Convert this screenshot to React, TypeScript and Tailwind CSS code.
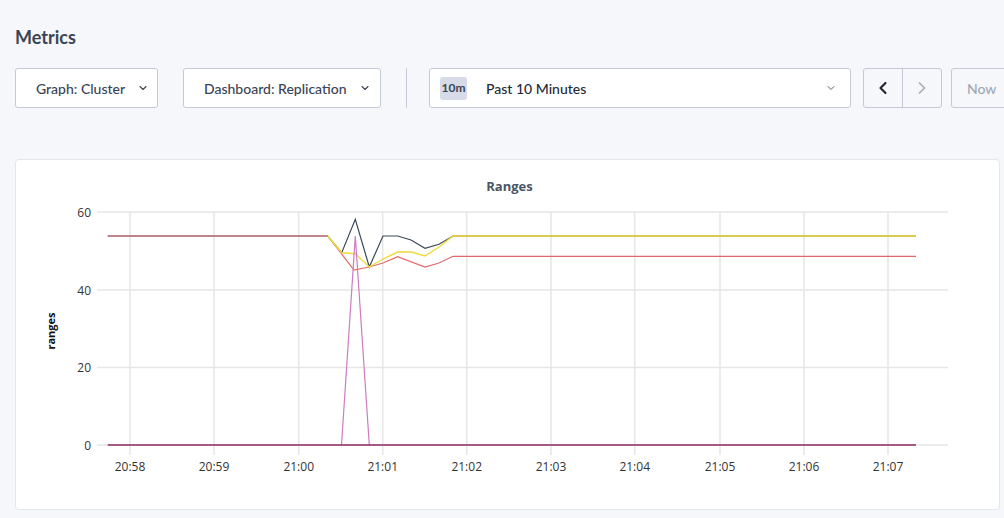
import React from "react";
import { ChevronDown, ChevronLeft, ChevronRight } from "lucide-react";

const xTicks = [
  { x: 129, l: "20:58" },
  { x: 213, l: "20:59" },
  { x: 297.7, l: "21:00" },
  { x: 381.7, l: "21:01" },
  { x: 465.7, l: "21:02" },
  { x: 550, l: "21:03" },
  { x: 633.7, l: "21:04" },
  { x: 719, l: "21:05" },
  { x: 803, l: "21:06" },
  { x: 887, l: "21:07" },
];
const yTicks = [
  { y: 211, l: "60" },
  { y: 289, l: "40" },
  { y: 366.5, l: "20" },
  { y: 444, l: "0" },
];

const red = "106.7,235 326.7,235 353,269 368.3,266 382,262 396.7,255.7 424,266 438,262 452,255.3 915,255.3";
const dark = "106.7,235 326.7,235 340.7,251.7 354.3,218.3 368.3,266 382,235 396.7,235 410,239 424,247.3 438,243.3 452,235 915,235";
const yellow = "326.7,235 340.7,251.7 354.3,252.7 368.3,266 382,258 396.7,251 410,251 424,255 438,246 452,235 915,235";
const pink = "340.5,444 354.3,235 368.3,444";

function Chart() {
  return (
    <svg width="985" height="351" viewBox="15 159 985 351" className="block">
      {yTicks.map((t) => (
        <g key={t.l}>
          <line x1={96} x2={947} y1={t.y} y2={t.y} stroke="#e6e6e6" strokeWidth={1.5} />
          <text x={90} y={t.y + 4.5} textAnchor="end" fontSize="12" fill="#333" fontFamily="'Open Sans', 'Liberation Sans', sans-serif">
            {t.l}
          </text>
        </g>
      ))}
      {xTicks.map((t) => (
        <g key={t.l}>
          <line x1={t.x} x2={t.x} y1={211} y2={454} stroke="#e6e6e6" strokeWidth={1.5} />
          <text x={t.x} y={470} textAnchor="middle" fontSize="12" fill="#333" fontFamily="'Open Sans', 'Liberation Sans', sans-serif">
            {t.l}
          </text>
        </g>
      ))}
      <text x={508.5} y={190} textAnchor="middle" fontSize="13" fontWeight="700" fill="#4a5568" fontFamily="'Open Sans', 'Noto Sans', sans-serif">
        Ranges
      </text>
      <text
        x={0}
        y={0}
        transform="translate(54 330) rotate(-90)"
        textAnchor="middle"
        fontSize="11"
        fontWeight="700"
        fill="#111"
        fontFamily="'Open Sans', 'Liberation Sans', sans-serif"
      >
        ranges
      </text>
      <polyline points={dark} fill="none" stroke="#3b4858" strokeWidth={1.2} />
      <polyline points={red} fill="none" stroke="#e06a6a" strokeWidth={1.2} />
      <polyline points={yellow} fill="none" stroke="#f0d93a" strokeWidth={1.4} />
      <polyline points={pink} fill="none" stroke="#cd7cc0" strokeWidth={1.2} />
      <line x1={106.7} x2={915} y1={444} y2={444} stroke="#8e2a63" strokeWidth={1.3} />
    </svg>
  );
}

export default function App() {
  return (
    <div
      className="w-[1004px] h-[518px] overflow-hidden bg-[#f5f7fa] pl-[15px] text-[#394455]"
      style={{ fontFamily: "Lato, 'Noto Sans', sans-serif" }}
    >
      <h1 className="pt-[25px] h-[68px] text-[18px] font-bold leading-[24px] text-[#3a4454]">Metrics</h1>
      <div className="flex items-center h-[40px]">
        <button className="shrink-0 h-[40px] w-[143px] bg-white border border-[#c5cad6] rounded-[3px] flex items-center pl-[20px] text-[14px] font-medium text-[#394455]">
          <span>Graph: Cluster</span>
          <ChevronDown size={12} strokeWidth={2.2} className="ml-[12px] text-[#394455]" />
        </button>
        <button className="shrink-0 ml-[25px] h-[40px] w-[198px] bg-white border border-[#c5cad6] rounded-[3px] flex items-center pl-[20px] text-[14px] font-medium text-[#394455]">
          <span>Dashboard: Replication</span>
          <ChevronDown size={12} strokeWidth={2.2} className="ml-[12px] text-[#394455]" />
        </button>
        <div className="shrink-0 ml-[25px] w-px h-[40px] bg-[#c5cad6]" />
        <div className="shrink-0 ml-[22px] h-[40px] w-[422px] bg-white border border-[#c5cad6] rounded-[3px] flex items-center pl-[10px] pr-[13px]">
          <span className="h-[23px] w-[27px] rounded-[3px] bg-[#d6dbe7] flex items-center justify-center text-[12px] font-bold text-[#394455]">
            10m
          </span>
          <span className="ml-[19px] text-[14px] font-medium text-[#242a35]">Past 10 Minutes</span>
          <ChevronDown size={12} strokeWidth={2} className="ml-auto text-[#5b6575]" />
        </div>
        <div className="shrink-0 ml-[12px] h-[40px] w-[79px] flex bg-[#f5f7fa] border border-[#c5cad6] rounded-[3px]">
          <div className="w-[39px] h-full flex items-center justify-center border-r border-[#c5cad6]">
            <ChevronLeft size={20} strokeWidth={2.6} className="text-[#242a35]" />
          </div>
          <div className="flex-1 h-full flex items-center justify-center">
            <ChevronRight size={20} strokeWidth={2} className="text-[#a3aab6]" />
          </div>
        </div>
        <button className="ml-[9px] h-[40px] w-[64px] shrink-0 border border-[#c5cad6] rounded-[3px] flex items-center pl-[15px] text-[14px] font-medium text-[#a0a7b3]">
          Now
        </button>
      </div>
      <div className="mt-[51px] w-[985px] h-[351px] bg-white border border-[#e3e6ec] rounded-[4px] overflow-hidden">
        <Chart />
      </div>
    </div>
  );
}
